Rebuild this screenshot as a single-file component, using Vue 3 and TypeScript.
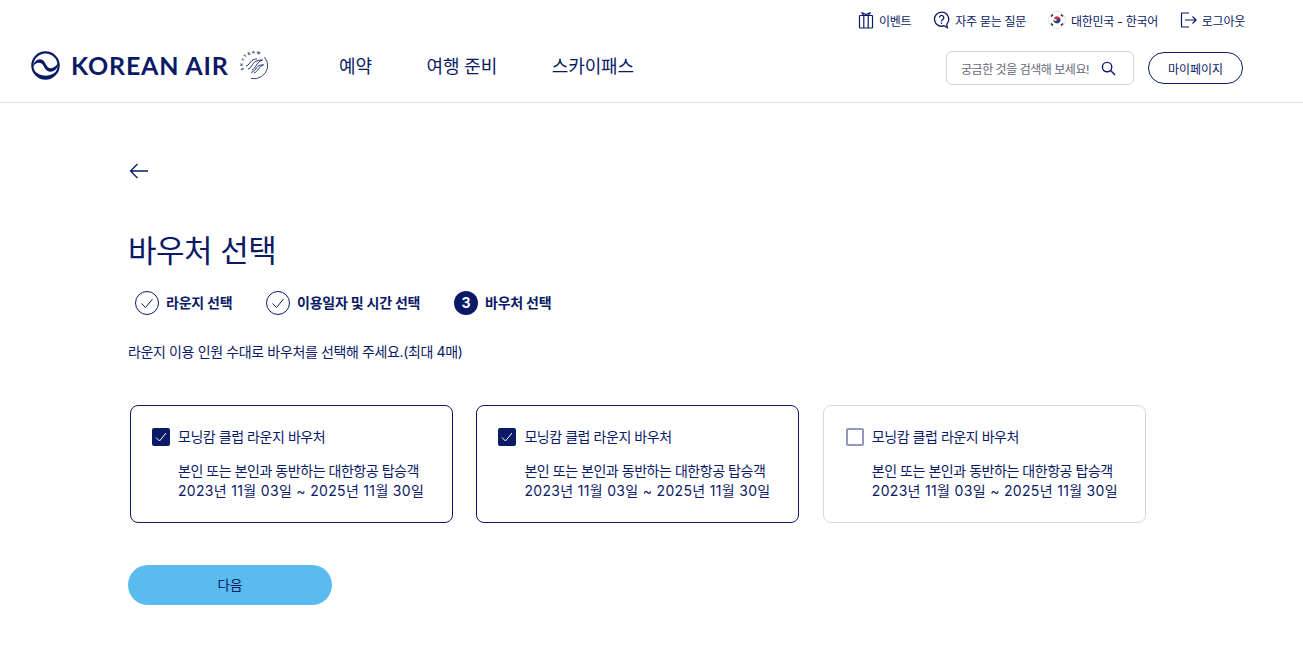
<script setup lang="ts">
const navItems: string[] = ['예약', '여행 준비', '스카이패스']
const cards = [
  { id: 1, checked: true },
  { id: 2, checked: true },
  { id: 3, checked: false },
]
</script>

<template>
  <div class="page">
    <header class="header">
      <div class="util">
        <a class="util-item">
          <svg width="16" height="18" viewBox="0 0 16 18" fill="none" stroke="#0a1a66" stroke-width="1.2">
            <rect x="1.5" y="4.5" width="13" height="12.5" rx="0.5" />
            <path d="M5.8 4.5V17M10.2 4.5V17M5.800 4.5 3.500 1.500 8 3.500 12.500 1.500 10.200 4.500" />
          </svg>
          <span>이벤트</span>
        </a>
        <a class="util-item">
          <svg width="17" height="18" viewBox="0 0 17 18" fill="none" stroke="#0a1a66" stroke-width="1.3">
            <path d="M8.5 1.2a7 7 0 1 0 2.6 13.5l3.2 2-.6-3.6A7 7 0 0 0 8.5 1.2Z" />
            <path d="M6.4 6.6a2.2 2.2 0 1 1 3.4 1.9c-.9.5-1.3 1-1.3 2" />
            <path d="M8.5 11.6v1.3" />
          </svg>
          <span>자주 묻는 질문</span>
        </a>
        <a class="util-item">
          <svg width="18" height="18" viewBox="0 0 18 18">
            <circle cx="9" cy="9" r="8.5" fill="#fff" stroke="#e2e2e6" />
            <path d="M5.9 7.4a3.4 3.4 0 0 1 6.2 3.1Z" fill="#d8303f" />
            <path d="M5.9 7.4a1.7 1.7 0 0 0 3.1 1.5 1.7 1.7 0 0 1 3.1 1.5 3.4 3.4 0 0 1-6.2-3Z" fill="#1d3f8f" />
            <path d="M3 5.5l2-2M13 3.5l2 2M3 12.5l2 2M13 14.5l2-2" stroke="#222" stroke-width="1.4" />
          </svg>
          <span>대한민국 - 한국어</span>
        </a>
        <a class="util-item">
          <svg width="17" height="16" viewBox="0 0 17 16" fill="none" stroke="#0a1a66" stroke-width="1.2">
            <path d="M9 1H1.5v14H9" />
            <path d="M5 8h11M12.5 4.5 16 8l-3.5 3.5" />
          </svg>
          <span>로그아웃</span>
        </a>
      </div>
      <div class="main-row">
        <div class="logo">
          <svg class="emblem" width="29" height="29" viewBox="0 0 30 30">
            <circle cx="15" cy="15" r="13.600" fill="none" stroke="#0a1a66" stroke-width="2.300" />
            <path d="M1.500 17C3 10 8 6.800 12 9.300 15 11.300 15.500 16.500 19 17.500 22.500 18.500 26 16 28.500 12 28.500 17.500 24 22 19.500 21.500 14.500 21 13.500 15 11 13 8 11 4 12 1.500 17Z" fill="#0a1a66" />
            <path d="M3 20C6 26.500 12 29 16 28.500 21 28 26 24 28 19 25 23.500 20 25.500 15 25.500 10 25.500 6 23.500 3 20Z" fill="#0a1a66" />
          </svg>
          <span class="wordmark">KOREAN AIR</span>
          <svg class="skyteam" width="30" height="30" viewBox="0 0 30 30" fill="none">
            <path id="skyteam-arc" d="M4.100 19.900A11.500 11.500 0 0 1 21.100 5.600" />
            <text class="skyteam-text"><textPath href="#skyteam-arc">SKYTEAM</textPath></text>
            <path d="M24.500 7a14 14 0 0 1 3 11A14 14 0 0 1 11 28.500" stroke="#0a1a66" stroke-width="0.8" />
            <path d="M8 19c3.500-.5 4-5.500 7.500-7.500 2-1 4.500-1.500 7-1.500-3 1-4.500 2.500-6 5-1.500 2.500-2.500 4-4.500 5M11 22.500c3.500-.5 4.500-4.500 7.500-6.500 1.500-.8 3-1.200 5-1.200-2.500 1-3.500 2.200-5 4.200-1.500 2-2.500 3.300-4.500 4" stroke="#0a1a66" stroke-width="0.9" />
            <path d="M6 16c3-.5 3.500-3.500 6-5.500 1.500-1 3-1.500 5-1.500" stroke="#0a1a66" stroke-width="0.9" />
          </svg>
        </div>
        <nav class="nav">
          <a v-for="item in navItems" :key="item" class="nav-item">{{ item }}</a>
        </nav>
        <div class="actions">
          <div class="search">
            <span class="placeholder">궁금한 것을 검색해 보세요!</span>
            <svg width="15" height="15" viewBox="0 0 16 16" fill="none" stroke="#0a1a66" stroke-width="1.500">
              <circle cx="6.500" cy="6.500" r="5" />
              <path d="M10.200 10.200 15 15" />
            </svg>
          </div>
          <button class="mypage" type="button">마이페이지</button>
        </div>
      </div>
    </header>

    <main class="content">
      <svg class="back" width="20" height="16" viewBox="0 0 20 16" fill="none" stroke="#0a1a66" stroke-width="1.300">
        <path d="M19 8H1.500M8.500 1 1.500 8l7 7" />
      </svg>
      <h1 class="title">바우처 선택</h1>
      <ol class="steps">
        <li class="step step-one">
          <svg width="24" height="24" viewBox="0 0 24 24" fill="none" stroke="#0a1a66">
            <circle cx="12" cy="12" r="11.500" />
            <path d="m6.500 12.500 4 4 7-8.500" />
          </svg>
          <span>라운지 선택</span>
        </li>
        <li class="step step-two">
          <svg width="24" height="24" viewBox="0 0 24 24" fill="none" stroke="#0a1a66">
            <circle cx="12" cy="12" r="11.500" />
            <path d="m6.500 12.500 4 4 7-8.500" />
          </svg>
          <span>이용일자 및 시간 선택</span>
        </li>
        <li class="step">
          <span class="step-num">3</span>
          <span>바우처 선택</span>
        </li>
      </ol>
      <p class="desc">라운지 이용 인원 수대로 바우처를 선택해 주세요.(최대 4매)</p>

      <div class="cards">
        <label v-for="card in cards" :key="card.id" class="card" :class="{ on: card.checked }">
          <span class="box" :class="{ on: card.checked }">
            <svg v-if="card.checked" width="18" height="18" viewBox="0 0 18 18" fill="none" stroke="#fff" stroke-width="1">
              <path d="m4 9.500 3.500 3.500L14 5" />
            </svg>
          </span>
          <span class="card-text">
            <span class="card-title">모닝캄 클럽 라운지 바우처</span>
            <span class="card-line first">본인 또는 본인과 동반하는 대한항공 탑승객</span>
            <span class="card-line date">2023년 11월 03일 ~ 2025년 11월 30일</span>
          </span>
        </label>
      </div>

      <button class="next" type="button">다음</button>
    </main>
  </div>
</template>

<style>
html, body { margin: 0; background: #fff; }
</style>

<style scoped>
.page {
  width: 1303px;
  height: 657px;
  overflow: hidden;
  font-family: "Inter", "Noto Sans CJK KR", "Noto Sans", sans-serif;
  color: #0a1a66;
}
.header {
  height: 102px;
  border-bottom: 1px solid #dcdce2;
  display: flex;
  flex-direction: column;
}
.util {
  display: flex;
  justify-content: flex-end;
  gap: 21.800px;
  padding: 11px 58px 0 0;
  height: 18px;
}
.util-item {
  display: flex;
  align-items: center;
  gap: 5px;
  font-size: 12px;
  letter-spacing: -0.250px;
  white-space: nowrap;
}
.main-row {
  display: flex;
  align-items: center;
  margin-top: 22px;
  padding-left: 31px;
  height: 34px;
}
.logo {
  display: flex;
  align-items: center;
  width: 308px;
  flex: none;
  position: relative;
  top: -3px;
}
.emblem { flex: none; }
.wordmark {
  font-family: "Lato", sans-serif;
  font-size: 25px;
  font-weight: 700;
  letter-spacing: 0.800px;
  margin-left: 11px;
  white-space: nowrap;
}
.skyteam { margin-left: 11px; flex: none; }
.skyteam-text {
  font-family: "Liberation Sans", sans-serif;
  font-size: 4px;
  font-weight: 700;
  letter-spacing: 1.400px;
  fill: #0a1a66;
}
.nav {
  display: flex;
  gap: 54.500px;
  flex: none;
}
.nav-item {
  font-size: 18px;
  letter-spacing: -0.100px;
  white-space: nowrap;
  position: relative;
  top: -3px;
}
.actions {
  margin-left: auto;
  margin-right: 60px;
  display: flex;
  align-items: center;
  gap: 14px;
}
.search {
  height: 32px;
  border: 1px solid #d6d6da;
  border-radius: 6px;
  display: flex;
  align-items: center;
  justify-content: space-between;
  padding: 0 17px 0 14px;
  box-sizing: content-box;
  width: 155px;
}
.placeholder {
  font-size: 12px;
  color: #666a7a;
  white-space: nowrap;
  letter-spacing: -0.470px;
}
.mypage {
  width: 95px;
  height: 32px;
  border: 1px solid #0a1a66;
  border-radius: 16px;
  background: #fff;
  color: #0a1a66;
  font: inherit;
  font-size: 12px;
  padding: 0;
}
.content {
  padding: 0 0 0 128px;
  display: flex;
  flex-direction: column;
  align-items: flex-start;
}
.back {
  margin-top: 60px;
  margin-left: 1px;
}
.title {
  margin: 50px 0 0;
  font-size: 31px;
  font-weight: 400;
  line-height: 44px;
  letter-spacing: -0.500px;
}
.steps {
  list-style: none;
  display: flex;
  margin: 18px 0 0 7px;
  padding: 0;
}
.step {
  display: flex;
  align-items: center;
  gap: 7px;
  font-size: 14px;
  font-weight: 700;
  line-height: 24px;
  letter-spacing: -0.220px;
  white-space: nowrap;
}
.step-one { width: 131px; }
.step-two { width: 188px; }
.step-num {
  width: 24px;
  height: 24px;
  border-radius: 50%;
  background: #0a1a66;
  color: #fff;
  font-size: 14px;
  display: flex;
  align-items: center;
  justify-content: center;
}
.desc {
  margin: 27px 0 0;
  font-size: 14px;
  line-height: 20px;
  letter-spacing: -0.370px;
}
.cards {
  display: flex;
  gap: 23.400px;
  margin: 43px 0 0 2px;
}
.card {
  width: 323px;
  height: 118px;
  box-sizing: border-box;
  border: 1px solid #d8d8dc;
  border-radius: 8px;
  padding: 21px 20px 0 22px;
  display: flex;
  gap: 8px;
}
.card.on {
  border-color: #0a1a66;
  padding-left: 21px;
}
.box {
  width: 18px;
  height: 18px;
  box-sizing: border-box;
  border: 2px solid #9397bd;
  border-radius: 2px;
  flex: none;
  margin-top: 1px;
  display: flex;
  align-items: center;
  justify-content: center;
  background: #fff;
}
.box.on {
  background: #0a1a66;
  border: 0;
}
.card-text {
  display: flex;
  flex-direction: column;
  font-size: 14px;
  line-height: 20px;
  letter-spacing: -0.450px;
  white-space: nowrap;
}
.card-line.first {
  margin-top: 14px;
  letter-spacing: -0.460px;
}
.card-line.date { letter-spacing: 0.320px; }
.next {
  margin-top: 42px;
  width: 204px;
  height: 40px;
  border: 0;
  border-radius: 20px;
  background: #59bbee;
  color: #0a1a66;
  font: inherit;
  font-size: 13.500px;
  padding: 0 0 2px;
}
</style>
